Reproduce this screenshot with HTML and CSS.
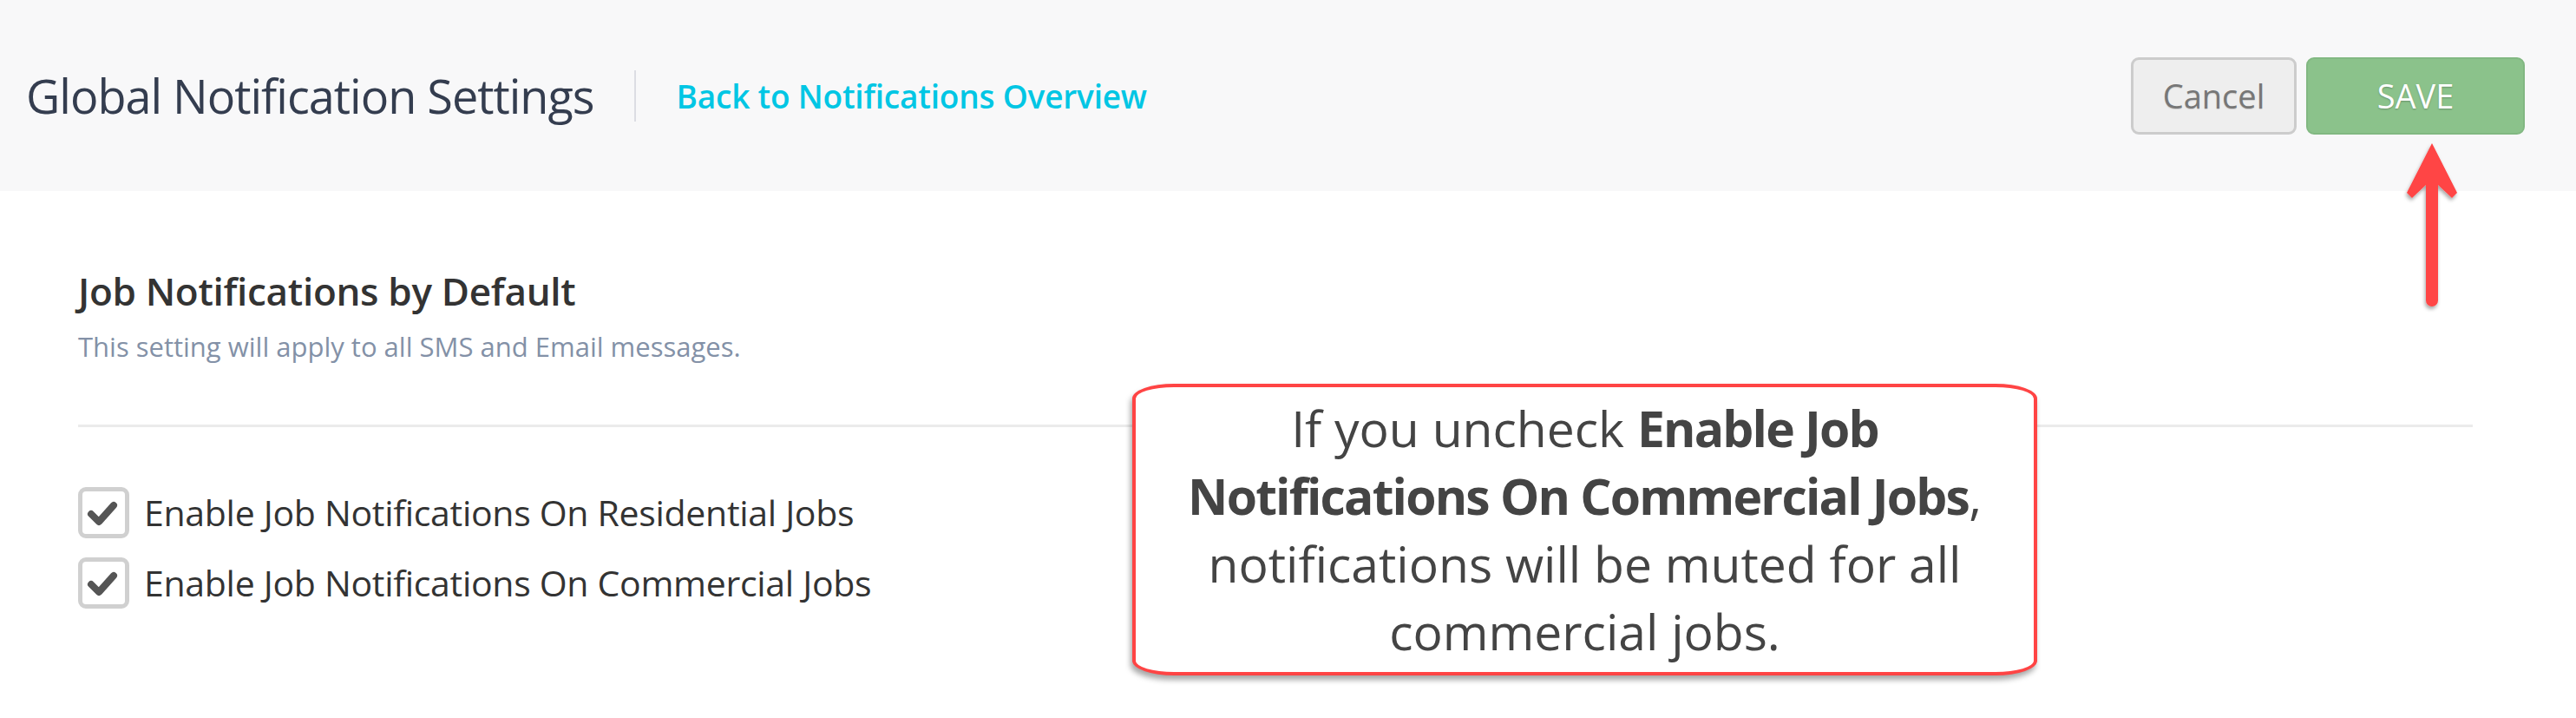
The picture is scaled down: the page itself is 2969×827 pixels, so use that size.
FILE: index.html
```html
<!DOCTYPE html>
<html lang="en">
<head>
<meta charset="utf-8">
<title>Global Notification Settings</title>
<link rel="stylesheet" href="styles.css">
</head>
<body>
<header class="topbar">
  <h1 class="page-title">Global Notification Settings</h1>
  <span class="divider-v"></span>
  <a class="back-link" href="#">Back to Notifications Overview</a>
  <div class="actions">
    <button class="btn btn-cancel" type="button">Cancel</button>
    <button class="btn btn-save" type="button">SAVE</button>
  </div>
</header>

<main class="content">
  <section class="settings">
    <h2 class="section-title">Job Notifications by Default</h2>
    <p class="section-sub">This setting will apply to all SMS and Email messages.</p>
    <hr class="rule">
    <ul class="options">
      <li class="option">
        <span class="box"><svg viewBox="0 0 59 59" width="59" height="59"><polyline points="15,31 24,40 41,21" fill="none" stroke="#555" stroke-width="8" stroke-linejoin="round" stroke-linecap="round"/></svg></span>
        <span class="label">Enable Job Notifications On Residential Jobs</span>
      </li>
      <li class="option">
        <span class="box"><svg viewBox="0 0 59 59" width="59" height="59"><polyline points="15,31 24,40 41,21" fill="none" stroke="#555" stroke-width="8" stroke-linejoin="round" stroke-linecap="round"/></svg></span>
        <span class="label">Enable Job Notifications On Commercial Jobs</span>
      </li>
    </ul>
  </section>
</main>

<div class="callout">
  If you uncheck <b>Enable Job</b><br><b>Notifications On Commercial Jobs</b>,<br>notifications will be muted for all<br>commercial jobs.
</div>

<svg class="arrow" viewBox="0 0 70 200" width="70" height="200">
  <defs>
    <filter id="sh" x="-30%" y="-10%" width="160%" height="130%">
      <feDropShadow dx="-1" dy="3" stdDeviation="2" flood-color="#000" flood-opacity="0.35"/>
    </filter>
  </defs>
  <path filter="url(#sh)" fill="#ff4444" d="M33 5 L62 62 L56 68 L40 53 L40 186 A7 7 0 0 1 26 186 L26 53 L10 68 L4 62 Z"/>
</svg>
</body>
</html>
```

FILE: styles.css
```css
html, body {
  margin: 0;
  padding: 0;
  background: #ffffff;
  font-family: "Open Sans", "Noto Sans", sans-serif;
}

.topbar {
  height: 220px;
  background: #f8f8f9;
  display: flex;
  align-items: center;
  padding: 0 59px 0 30px;
  box-sizing: border-box;
}

.page-title {
  margin: 0;
  font-weight: 400;
  font-size: 54px;
  letter-spacing: -1px;
  color: #343d4f;
  line-height: 1;
}

.divider-v {
  width: 2px;
  height: 59px;
  background: #dcdde3;
  margin: 0 47px 0 46px;
}

.back-link {
  color: #00c6e4;
  font-weight: 600;
  font-size: 37px;
  letter-spacing: -0.2px;
  line-height: 1;
  text-decoration: none;
}

.actions {
  margin-left: auto;
  display: flex;
  gap: 11px;
}

.btn {
  height: 89px;
  border-radius: 9px;
  font-family: "Open Sans", sans-serif;
  font-size: 38px;
  cursor: pointer;
  box-sizing: border-box;
  padding: 0;
}

.btn-cancel {
  width: 191px;
  background: #eeeeee;
  border: 3px solid #cccccc;
  color: #777777;
  text-shadow: 0 1px 1px rgba(0, 0, 0, 0.15);
}

.btn-save {
  width: 252px;
  background: #8bc28b;
  border: 2px solid #82b882;
  color: #ffffff;
  text-shadow: 0 1px 2px rgba(0, 0, 0, 0.25);
}

.content {
  padding: 89px 119px 0 90px;
}

.section-title {
  margin: 0;
  font-size: 44px;
  font-weight: 600;
  letter-spacing: -0.3px;
  line-height: 53px;
  color: #333333;
}

.section-sub {
  margin: 17px 0 0;
  font-size: 31px;
  line-height: 40px;
  color: #8391a7;
}

.rule {
  margin: 70px 0 0;
  border: 0;
  height: 3px;
  background: #ebebeb;
}

.options {
  list-style: none;
  margin: 69px 0 0;
  padding: 0;
  display: flex;
  flex-direction: column;
  gap: 22px;
}

.option {
  display: flex;
  align-items: center;
  gap: 17px;
  height: 59px;
}

.box {
  width: 59px;
  height: 59px;
  box-sizing: border-box;
  border: 5px solid #d0d0d0;
  border-radius: 9px;
  background: #fff;
  position: relative;
  overflow: hidden;
}

.box svg {
  position: absolute;
  left: -5px;
  top: -5px;
}

.label {
  font-size: 41px;
  letter-spacing: -0.3px;
  line-height: 59px;
  color: #333333;
}

.callout {
  position: absolute;
  left: 1305px;
  top: 442px;
  width: 1043px;
  height: 336px;
  box-sizing: border-box;
  border: 4px solid #ff4444;
  border-radius: 48px / 17px;
  background: #ffffff;
  box-shadow: -2px 5px 6px rgba(0, 0, 0, 0.35);
  text-align: center;
  font-size: 57px;
  line-height: 78px;
  color: #444444;
  padding-top: 8px;
  white-space: nowrap;
}

.callout b {
  font-weight: 700;
  letter-spacing: -1.8px;
}

.arrow {
  position: absolute;
  left: 2770px;
  top: 160px;
}
```
